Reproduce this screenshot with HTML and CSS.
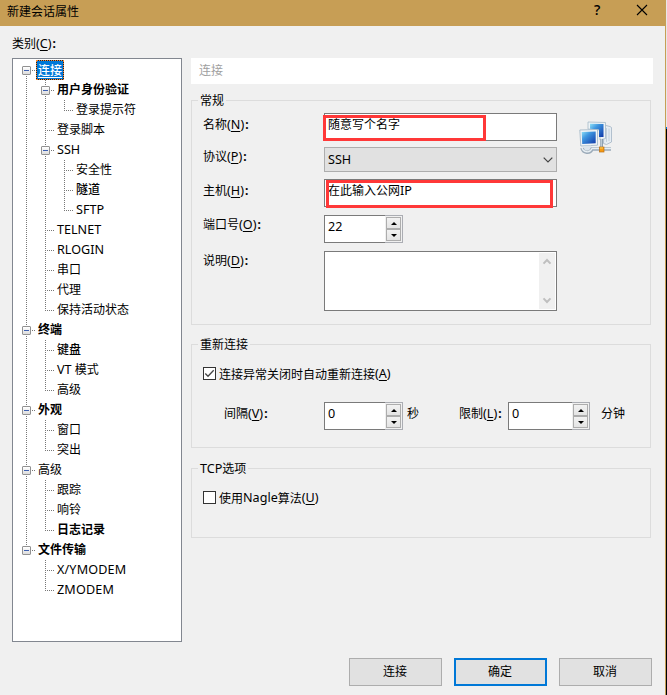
FILE: index.html
```html
<!DOCTYPE html>
<html lang="zh-CN">
<head>
<meta charset="utf-8">
<title>新建会话属性</title>
<link rel="stylesheet" href="styles.css">
</head>
<body>
<div class="screen">
<div class="dialog">
  <header class="titlebar">
    <span class="title">新建会话属性</span>
    <span class="help">?</span>
    <svg class="close" width="12" height="12" viewBox="0 0 12 12"><path d="M1 1l10 10M11 1L1 11" stroke="#000" stroke-width="1.1" fill="none"/></svg>
  </header>
  <div class="caption">类别<span class="en">(<u>C</u>)</span><b class="colon">:</b></div>
  <main class="body">
    <nav class="tree">
      <ul class="root">
        <li><div class="row open"><span class="label selected">连接</span></div>
          <ul>
            <li><div class="row open"><span class="label strong">用户身份验证</span></div>
              <ul><li><div class="row"><span class="label">登录提示符</span></div></li></ul>
            </li>
            <li><div class="row"><span class="label">登录脚本</span></div></li>
            <li><div class="row open"><span class="label en">SSH</span></div>
              <ul>
                <li><div class="row"><span class="label">安全性</span></div></li>
                <li><div class="row"><span class="label medium">隧道</span></div></li>
                <li><div class="row"><span class="label en">SFTP</span></div></li>
              </ul>
            </li>
            <li><div class="row"><span class="label en">TELNET</span></div></li>
            <li><div class="row"><span class="label en">RLOGIN</span></div></li>
            <li><div class="row"><span class="label">串口</span></div></li>
            <li><div class="row"><span class="label">代理</span></div></li>
            <li><div class="row"><span class="label">保持活动状态</span></div></li>
          </ul>
        </li>
        <li><div class="row open"><span class="label strong">终端</span></div>
          <ul>
            <li><div class="row"><span class="label medium">键盘</span></div></li>
            <li><div class="row"><span class="label"><span class="en">VT </span>模式</span></div></li>
            <li><div class="row"><span class="label">高级</span></div></li>
          </ul>
        </li>
        <li><div class="row open"><span class="label strong">外观</span></div>
          <ul>
            <li><div class="row"><span class="label">窗口</span></div></li>
            <li><div class="row"><span class="label">突出</span></div></li>
          </ul>
        </li>
        <li><div class="row open"><span class="label">高级</span></div>
          <ul>
            <li><div class="row"><span class="label">跟踪</span></div></li>
            <li><div class="row"><span class="label">响铃</span></div></li>
            <li><div class="row"><span class="label strong">日志记录</span></div></li>
          </ul>
        </li>
        <li><div class="row open"><span class="label strong">文件传输</span></div>
          <ul>
            <li><div class="row"><span class="label en modem">X/YMODEM</span></div></li>
            <li><div class="row"><span class="label en modem">ZMODEM</span></div></li>
          </ul>
        </li>
      </ul>
    </nav>
    <section class="pane">
      <div class="heading">连接</div>

      <div class="group general">
        <span class="legend">常规</span>
        <div class="fields">
          <div class="field low"><label>名称<span class="en">(<u>N</u>)</span><b class="colon">:</b></label>
            <div class="box text name">随意写个名字<i class="mark mark-name"></i></div></div>
          <div class="field"><label>协议<span class="en">(<u>P</u>)</span><b class="colon">:</b></label>
            <div class="box combo"><span class="en">SSH</span><svg width="10" height="6" viewBox="0 0 10 6"><path d="M.7.7L5 5 9.3.7" stroke="#444" stroke-width="1.2" fill="none"/></svg></div></div>
          <div class="field low"><label>主机<span class="en">(<u>H</u>)</span><b class="colon">:</b></label>
            <div class="box text host">在此输入公网<span class="en">IP</span><i class="mark mark-host"></i></div></div>
          <div class="field"><label>端口号<span class="en">(<u>O</u>)</span><b class="colon">:</b></label>
            <div class="spin"><span class="value">22</span><span class="steps"><i class="up"></i><i class="down"></i></span></div></div>
          <div class="field"><label>说明<span class="en">(<u>D</u>)</span><b class="colon">:</b></label>
            <div class="box area"><div class="scroll">
              <svg width="10" height="7" viewBox="0 0 10 7"><path d="M1.5 5.600L5 2l3.500 3.600" stroke="#bfbfbf" stroke-width="2" fill="none"/></svg>
              <svg width="10" height="7" viewBox="0 0 10 7"><path d="M1.500 1.400L5 5l3.500-3.600" stroke="#bfbfbf" stroke-width="2" fill="none"/></svg>
            </div></div></div>
        </div>
        <svg class="network" width="34" height="34" viewBox="0 0 34 34">
          <defs>
            <linearGradient id="scr" x1="0" y1="0" x2="1" y2="1"><stop offset="0" stop-color="#8fe0f7"/><stop offset=".35" stop-color="#3f97e0"/><stop offset="1" stop-color="#0f38a8"/></linearGradient>
          </defs>
          <path d="M25 4l6 1.500 1.500 1V21l-5 2.500-3-1z" fill="#e6edf3" stroke="#a3b4c4" stroke-width=".8"/>
          <path d="M27.500 7v14M30 7.500V20" stroke="#c3d0dc" stroke-width="1"/>
          <path d="M9 1l17.500.5v16L21 19V9L9 8z" fill="#eef3f6" stroke="#a6bac8" stroke-width=".8"/>
          <path d="M11 2.800l13.500.2v13L20 16V8.500l-9-.7z" fill="url(#scr)"/>
          <path d="M.8 9l17.700-.5v15.700L1.800 25z" fill="#f1f5f7" stroke="#9eb4c4" stroke-width=".8"/>
          <path d="M2.700 11l14-.5v11.700l-13.500.8z" fill="url(#scr)"/>
          <path d="M5 25l7-.5 1 3-4 2-5-1z" fill="#dce5ec"/>
          <path d="M3 27c1 5 8 6 10 1h19" fill="none" stroke="#9cabb9" stroke-width="3.400"/>
          <path d="M3 26.500c1 5 8 6 10 1h19" fill="none" stroke="#e7eef3" stroke-width="1.300"/>
          <path d="M22.500 18v9" stroke="#8599aa" stroke-width="2.800"/>
          <path d="M22.200 18v9" stroke="#d8e2e9" stroke-width="1"/>
          <rect x="20.500" y="26" width="4.500" height="5" fill="#f79a13" stroke="#b87018" stroke-width=".7"/>
          <path d="M21 27h3" stroke="#ffd35b"/>
        </svg>
      </div>

      <div class="group reconnect">
        <span class="legend">重新连接</span>
        <div class="check"><span class="tick"><svg width="11" height="11" viewBox="0 0 11 11"><path d="M1.300 5.500L4 8.200l5.700-6" stroke="#444" stroke-width="1.300" fill="none"/></svg></span>连接异常关闭时自动重新连接<span class="en">(<u>A</u>)</span></div>
        <div class="timing">
          <label class="interval">间隔<span class="en">(<u>V</u>)</span><b class="colon">:</b></label>
          <div class="spin"><span class="value">0</span><span class="steps"><i class="up"></i><i class="down"></i></span></div>
          <span class="unit seconds">秒</span>
          <label class="limit">限制<span class="en">(<u>L</u>)</span><b class="colon">:</b></label>
          <div class="spin wide"><span class="value">0</span><span class="steps"><i class="up"></i><i class="down"></i></span></div>
          <span class="unit minutes">分钟</span>
        </div>
      </div>

      <div class="group tcp">
        <span class="legend"><span class="en">TCP</span>选项</span>
        <div class="check"><span class="tick"></span>使用<span class="en">Nagle</span>算法<span class="en">(<u>U</u>)</span></div>
      </div>
    </section>
  </main>
  <footer class="buttons">
    <div class="button">连接</div>
    <div class="button primary">确定</div>
    <div class="button">取消</div>
  </footer>
</div>
<div class="behind"></div>
</div>
</body>
</html>
```
FILE: styles.css
```css
*, *::before, *::after { box-sizing: border-box; }
body {
  margin: 0;
  font: 12px/18px "Noto Sans CJK SC", sans-serif;
  color: #000;
  background: #f0f0f0;
  overflow: hidden;
}
ul { list-style: none; margin: 0; padding: 0; }
i { font-style: normal; }
u { text-underline-offset: 2px; text-decoration-thickness: 1px; text-decoration-skip-ink: none; }
.en { font-family: "Noto Sans", "Open Sans", sans-serif; font-size: 12.6px; }
.colon { font-family: "Noto Sans", sans-serif; font-weight: 700; margin-left: 1px; }

.screen { display: flex; width: 667px; height: 695px; }
.dialog { width: 666px; height: 695px; border-right: 1px solid #c79e55; }
.behind {
  width: 1px;
  background: linear-gradient(#e8e8e8 0 127px, #0078d7 127px 129px, #000 129px);
}

.titlebar {
  display: flex;
  align-items: center;
  height: 26px;
  padding: 0 17px 0 7px;
  background: #c79e55;
}
.title { flex: 1; padding-bottom: 5px; }
.help { font: 600 14px/20px "Open Sans", sans-serif; width: 7px; margin-right: 35px; padding-bottom: 6px; }
.close { margin-bottom: 6px; }

.caption { height: 32px; padding: 8px 0 0 12px; }
.body { display: flex; gap: 9px; padding-left: 12px; height: 584px; }

.tree { width: 170px; height: 584px; border: 1px solid #828790; background: #fff; padding-top: 1px; }
.tree li { position: relative; }
.tree li::before {
  content: "";
  position: absolute;
  left: 13px;
  top: 0;
  width: 1px;
  height: 100%;
  background: repeating-linear-gradient(#777 0 1px, transparent 1px 2px);
}
.tree li:last-child::before { height: 11px; }
.tree .root > li:first-child::before { top: 10px; height: calc(100% - 10px); }
.tree ul ul { margin-left: 19px; }
.row { position: relative; display: flex; height: 20px; padding-left: 23px; }
.row::before {
  content: "";
  position: absolute;
  left: 13px;
  top: 10px;
  width: 9px;
  height: 1px;
  background: repeating-linear-gradient(90deg, #777 0 1px, transparent 1px 2px);
}
.row.open::after {
  content: "";
  position: absolute;
  left: 9px;
  top: 6px;
  width: 9px;
  height: 9px;
  border: 1px solid #919191;
  border-radius: 1px;
  background:
    linear-gradient(#3c5fb0, #3c5fb0) center / 5px 1px no-repeat,
    linear-gradient(#fff, #dcdcdc);
}
.label { padding: 0 2px; line-height: 18px; white-space: nowrap; }
.label.en { line-height: 19px; }
.modem { letter-spacing: .15px; }
.strong { font-weight: 700; }
.medium { font-weight: 500; }
.selected {
  padding: 0 1px;
  border: 1px solid #10263c;
  outline: 1px dotted #ff8728;
  outline-offset: -1px;
  color: #fff;
  background: #0078d7;
  font-weight: 500;
  text-decoration: underline;
  text-underline-offset: 2px;
}

.pane { width: 462px; }
.heading { height: 26px; padding-left: 8px; line-height: 24px; color: #a0a0a0; background: #fff; }
.group { position: relative; width: 460px; border: 1px solid #dcdcdc; }
.legend {
  position: absolute;
  left: 6px;
  top: -10px;
  padding: 0 2px;
  background: #f0f0f0;
}
.general { display: flex; height: 225px; margin-top: 16px; padding: 12px 0 0 11px; }
.reconnect { height: 104px; margin-top: 19px; padding: 22px 0 0 11px; }
.tcp { height: 70px; margin-top: 20px; padding: 22px 0 0 11px; }

.fields { display: flex; flex-direction: column; width: 354px; }
.field { display: flex; align-items: flex-start; margin-bottom: 8px; }
.field:nth-child(1) { margin-bottom: 6px; }
.field:nth-child(2) { margin-bottom: 7px; }
.field label { width: 121px; }
.low label { padding-top: 2px; }
.box { position: relative; width: 233px; border: 1px solid #7a7a7a; background: #fff; padding-left: 3px; }
.text { height: 28px; line-height: 20px; }
.combo {
  display: flex;
  justify-content: space-between;
  align-items: center;
  height: 25px;
  padding-right: 3px;
  border-color: #adadad;
  background: #e1e1e1;
}
.area { height: 60px; padding: 1px; }
.scroll {
  display: flex;
  flex-direction: column;
  justify-content: space-between;
  align-items: center;
  width: 16px;
  height: 56px;
  margin-left: auto;
  padding: 5px 1px 5px 0;
  background: #f0f0f0;
}
.mark { position: absolute; border: 3px solid #ff3838; }
.mark-name { left: -2px; top: 1px; width: 163px; height: 26px; }
.mark-host { left: 1px; top: 0; width: 227px; height: 28px; }

.spin { display: flex; width: 79px; height: 28px; }
.spin.wide { width: 82px; }
.value {
  flex: 1;
  padding-left: 3px;
  font: 12.6px/22px "Noto Sans", sans-serif;
  border: 1px solid #7a7a7a;
  border-right: 0;
  background: #fff;
}
.steps {
  display: grid;
  grid-template-rows: 12px 12px;
  width: 18px;
  padding: 1px;
  border: 1px solid #abadb3;
  border-left: 0;
  background: #f0f0f0;
}
.steps i {
  display: flex;
  align-items: center;
  justify-content: center;
  border: 1px solid #adadad;
  background: linear-gradient(#f2f2f2, #e4e4e4);
}
.steps i::before { content: ""; border: 3px solid transparent; border-top-width: 0; border-bottom: 3px solid #000; }
.steps .down::before { border-top: 3px solid #000; border-bottom-width: 0; }

.network { margin: 8px 0 0 22px; }

.check { display: flex; align-items: center; height: 13px; white-space: nowrap; }
.tick { display: flex; width: 13px; height: 13px; margin-right: 3px; border: 1px solid #333; background: #fff; }

.timing { display: flex; margin-top: 22px; }
.interval { width: 100px; margin-left: 21px; padding-top: 2px; }
.seconds { width: 52px; margin-left: 4px; }
.unit { padding-top: 2px; }
.limit { width: 49px; padding-top: 2px; }
.minutes { margin-left: 11px; }

.buttons { display: flex; justify-content: flex-end; gap: 12px; padding: 16px 13px 0 0; }
.button {
  display: flex;
  align-items: center;
  justify-content: center;
  width: 93px;
  height: 28px;
  padding: 0 1px 2px 0;
  border: 1px solid #adadad;
  background: #e1e1e1;
}
.primary { border: 2px solid #0078d7; }
```
